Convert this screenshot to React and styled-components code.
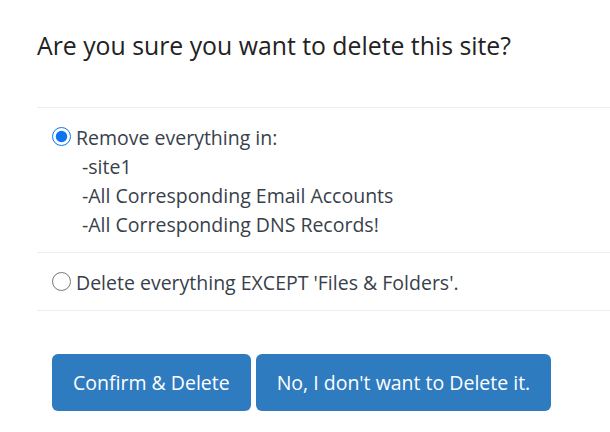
import * as React from 'react';
import styled, { createGlobalStyle } from 'styled-components';

const GlobalStyle = createGlobalStyle`
  html, body {
    margin: 0;
    padding: 0;
    background: #fff;
  }
  body {
    font-family: "Open Sans", "Noto Sans", sans-serif;
    color: #383f4b;
  }
`;

const Dialog = styled.div`
  padding: 28px 0 21px 37px;
  width: 610px;
  box-sizing: border-box;
  overflow: hidden;
`;

const Title = styled.h2`
  margin: 0 0 44px;
  font-size: 24.8px;
  font-weight: 400;
  line-height: 35px;
  color: #222;
`;

const Options = styled.div`
  border-bottom: 1px solid #eee;
  margin-right: -20px;
  margin-bottom: 43px;
`;

const Option = styled.label`
  display: flex;
  align-items: flex-start;
  padding: 15px 15px 13px;
  border-top: 1px solid #eee;
  font-size: 19.5px;
  line-height: 29px;
  cursor: pointer;
`;

const Radio = styled.input.attrs({ type: 'radio', name: 'delete-mode' })`
  width: 19px;
  height: 19px;
  margin: 4px 5px 0 0;
  flex: none;
  accent-color: #0b75f5;
`;

const Text = styled.div`
  display: flex;
  flex-direction: column;
`;

const SubLine = styled.span`
  padding-left: 6px;
`;

const Actions = styled.div`
  display: flex;
  gap: 5px;
  padding-left: 15px;
`;

const Button = styled.button`
  font-family: inherit;
  font-size: 19.5px;
  line-height: 25px;
  height: 57px;
  color: #fff;
  background: #2e7bbf;
  border: none;
  border-radius: 6px;
  padding: 0 21px;
  cursor: pointer;
`;

const App = () => {
  const [mode, setMode] = React.useState('all');
  return (
    <>
      <GlobalStyle />
      <Dialog>
        <Title>Are you sure you want to delete this site?</Title>
        <Options>
          <Option>
            <Radio checked={mode === 'all'} onChange={() => setMode('all')} />
            <Text>
              <span>Remove everything in:</span>
              <SubLine>-site1</SubLine>
              <SubLine>-All Corresponding Email Accounts</SubLine>
              <SubLine>-All Corresponding DNS Records!</SubLine>
            </Text>
          </Option>
          <Option>
            <Radio checked={mode === 'keep'} onChange={() => setMode('keep')} />
            <Text>
              <span>Delete everything EXCEPT 'Files &amp; Folders'.</span>
            </Text>
          </Option>
        </Options>
        <Actions>
          <Button>Confirm &amp; Delete</Button>
          <Button>No, I don't want to Delete it.</Button>
        </Actions>
      </Dialog>
    </>
  );
};

export default App;
